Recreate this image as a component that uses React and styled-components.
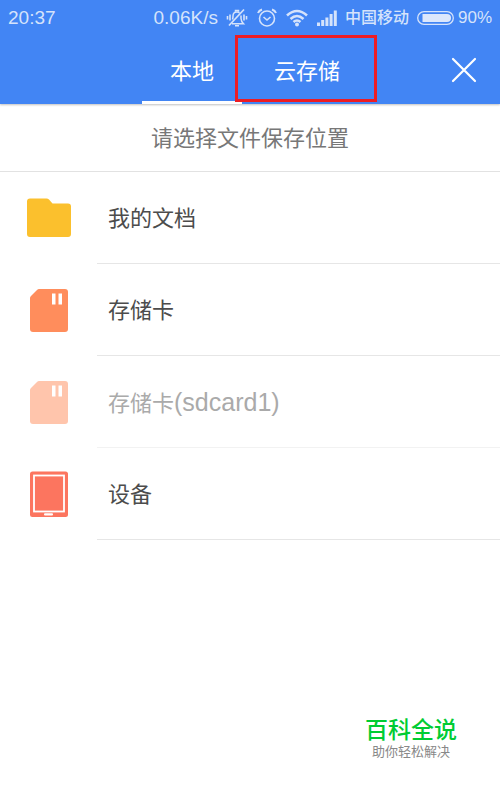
import React, { useState } from "react";
import styled, { createGlobalStyle } from "styled-components";

const places = [
  { id: "docs", name: "我的文档", icon: FolderIcon },
  { id: "card", name: "存储卡", icon: CardIcon },
  { id: "card1", name: "存储卡", suffix: "(sdcard1)", icon: CardIcon, disabled: true },
  { id: "device", name: "设备", icon: DeviceIcon },
];

const tabs = [
  { id: "local", label: "本地" },
  { id: "cloud", label: "云存储", marked: true },
];

export const App = () => {
  const [activeTab, setActiveTab] = useState("local");

  return (
    <>
      <GlobalStyle />
      <StyledPage>
        <StyledHeader>
          <StatusBar />
          <StyledNav>
            <StyledTabs role="tablist">
              {tabs.map((tab) => (
                <StyledTab
                  key={tab.id}
                  role="tab"
                  aria-selected={activeTab === tab.id}
                  $active={activeTab === tab.id}
                  onClick={() => setActiveTab(tab.id)}
                >
                  {tab.label}
                  {tab.marked && <StyledMarker />}
                </StyledTab>
              ))}
            </StyledTabs>
            <StyledClose aria-label="关闭">
              <svg width="26" height="26" viewBox="0 0 26 26" stroke="#fff" strokeWidth="2.2">
                <path d="M2 2l22 22M24 2L2 24" strokeLinecap="round" />
              </svg>
            </StyledClose>
          </StyledNav>
        </StyledHeader>
        <StyledTitle>请选择文件保存位置</StyledTitle>
        <StyledList>
          {places.map((place) => (
            <PlaceRow key={place.id} {...place} />
          ))}
        </StyledList>
        <StyledFooter>
          <StyledBrand>百科全说</StyledBrand>
          <StyledSlogan>助你轻松解决</StyledSlogan>
        </StyledFooter>
      </StyledPage>
    </>
  );
};
export default App;

const PlaceRow = ({ name, suffix, icon: Icon, disabled = false }) => (
  <StyledItem>
    <StyledRow disabled={disabled}>
      <StyledIconCell>
        <Icon />
      </StyledIconCell>
      <StyledName $light={disabled}>
        <span>
          {name}
          {suffix && <StyledSuffix>{suffix}</StyledSuffix>}
        </span>
      </StyledName>
    </StyledRow>
  </StyledItem>
);

const StatusBar = () => (
  <StyledStatus>
    <StyledClock>20:37</StyledClock>
    <StyledSpeed>0.06K/s</StyledSpeed>
    <MuteIcon />
    <AlarmIcon />
    <WifiIcon />
    <SignalIcon />
    <StyledCarrier>中国移动</StyledCarrier>
    <BatteryIcon />
    <StyledPercent>90%</StyledPercent>
  </StyledStatus>
);

function FolderIcon() {
  return (
    <svg width="44" height="40" viewBox="0 0 44 40">
      <path
        fill="#fbc02d"
        d="M3 .5H19.500Q21 .5 22 1.500L25.500 5.500H41Q44 5.500 44 8.500V36Q44 39 41 39H3Q0 39 0 36V3.500Q0 .5 3 .5Z"
      />
    </svg>
  );
}

function CardIcon() {
  return (
    <svg width="38" height="44" viewBox="0 0 38 44">
      <path
        fill="#ff8d5c"
        d="M9 1H35Q38 1 38 4V41Q38 44 35 44H3Q0 44 0 41V10Q0 9 1 8L7 2Q8 1 9 1Z"
      />
      <path fill="#fff" d="M22 5.500h3.500v11H22zM28.500 5.500H32v11h-3.500z" />
    </svg>
  );
}

function DeviceIcon() {
  return (
    <svg width="38" height="46" viewBox="0 0 38 46">
      <rect y=".5" width="38" height="45.500" rx="2.500" fill="#fc755f" />
      <rect x="4" y="4.500" width="30" height="36" fill="none" stroke="#fff" strokeWidth="1.800" />
      <rect x="14" y="42.300" width="9" height="2.200" rx="1" fill="#fff" />
    </svg>
  );
}

const MuteIcon = () => (
  <svg width="22" height="20" viewBox="0 0 22 20" fill="none" stroke="#d5e3fb" strokeWidth="1.500">
    <path d="M6.500 11.500Q7 10 7 8Q7 4 11 4Q12.500 4 13.500 4.800M15 7.500V10.500Q15.200 13.500 17.500 15.700H6" />
    <path d="M9.500 3.700V2.500H12.500V3.700M9 17.800H13" />
    <path d="M18 1.500L3 17.500" strokeWidth="1.700" />
    <path d="M4 6.500V12.500M1.500 8V11.500M18 6.500V12.500M20.500 8V11.500" strokeWidth="1.600" />
  </svg>
);

const AlarmIcon = () => (
  <svg width="20" height="20" viewBox="0 0 20 20" fill="none" stroke="#d5e3fb" strokeWidth="1.600">
    <circle cx="10" cy="10.500" r="7.500" />
    <path d="M6.500 9L10 12L13.500 9" />
    <path d="M1 5Q2 2.500 5 1.500M19 5Q18 2.500 15 1.500" strokeWidth="2" />
  </svg>
);

const WifiIcon = () => (
  <svg width="22" height="18" viewBox="0 0 22 18" fill="none" stroke="#d5e3fb" strokeWidth="2.600">
    <path d="M1 6.500Q11 -2.500 21 6.500M4.500 10Q11 4 17.500 10M7.500 13Q11 10 14.500 13" />
    <circle cx="11" cy="15.500" r="2" fill="#d5e3fb" stroke="none" />
  </svg>
);

const SignalIcon = () => (
  <svg width="20" height="16" viewBox="0 0 20 16" fill="#d5e3fb">
    <path d="M0 12.500h3V16H0zM4.200 10h3v6h-3zM8.400 7.500h3V16h-3zM12.600 4h3v12h-3zM16.800 .5h3V16h-3z" />
  </svg>
);

const BatteryIcon = () => (
  <svg width="37" height="14" viewBox="0 0 37 14">
    <rect x=".7" y=".7" width="35.600" height="12.600" rx="6.300" fill="none" stroke="#d5e3fb" strokeWidth="1.300" />
    <path fill="#dbe7fc" d="M5.500 3H30a4 4 0 0 1 0 8H5.500z" />
  </svg>
);

const GlobalStyle = createGlobalStyle`
  * {
    box-sizing: border-box;
  }

  body {
    margin: 0;
    background: #fff;
    font-family: "Liberation Sans", "Noto Sans CJK SC", sans-serif;
  }

  button {
    margin: 0;
    padding: 0;
    border: 0;
    background: none;
    font: inherit;
    color: inherit;
  }

  svg {
    display: block;
    flex-shrink: 0;
  }
`;

const StyledPage = styled.div`
  display: flex;
  flex-direction: column;
  min-height: 100vh;
`;

const StyledHeader = styled.header`
  background: #4285f4;
  box-shadow: 0 1px 2px rgba(0, 0, 0, 0.25);
`;

const StyledStatus = styled.div`
  display: flex;
  height: 36px;
  padding: 0 8px;
  align-items: center;
  gap: 8px;
  color: #d5e3fb;
  white-space: nowrap;

  svg + svg {
    margin-left: 1px;
  }
`;

const StyledClock = styled.span`
  margin-right: auto;
  font-size: 19px;
`;

const StyledSpeed = styled.span`
  font-size: 19px;
`;

const StyledCarrier = styled.span`
  font-size: 16px;
  font-weight: 500;
  line-height: 20px;
`;

const StyledPercent = styled.span`
  margin-left: -4px;
  font-size: 17px;
`;

const StyledNav = styled.nav`
  display: grid;
  grid-template-columns: 1fr auto 1fr;
  height: 68px;
  padding: 0 23px;
  align-items: center;
`;

const StyledTabs = styled.div`
  display: flex;
  grid-column: 2;
  height: 100%;
  padding-left: 14px;
`;

const StyledTab = styled.button`
  position: relative;
  padding: 0 28px;
  border-bottom: 3px solid ${({ $active }) => ($active ? "#fff" : "transparent")};
  font-size: 22px;
  color: #fff;

  & + & {
    padding: 0 32px;
  }
`;

const StyledMarker = styled.span`
  position: absolute;
  top: -1px;
  bottom: -1px;
  left: -7px;
  right: -5px;
  border: 3px solid #ed1c24;
`;

const StyledClose = styled.button`
  justify-self: end;
`;

const StyledTitle = styled.h1`
  margin: 0;
  padding: 18px 0 16px;
  border-bottom: 1px solid #e2e2e2;
  font-size: 22px;
  font-weight: 400;
  line-height: 33px;
  text-align: center;
  color: #777;
`;

const StyledList = styled.ul`
  margin: 0;
  padding: 0;
  list-style: none;
`;

const StyledItem = styled.li`
  display: flex;
`;

const StyledRow = styled.button`
  display: flex;
  width: 100%;
  height: 92px;
  align-items: stretch;
  text-align: left;

  &:disabled svg {
    opacity: 0.5;
  }
`;

const StyledIconCell = styled.span`
  display: flex;
  width: 97px;
  align-items: center;
  justify-content: center;
`;

const StyledName = styled.span`
  display: flex;
  flex: 1;
  padding: 3px 0 0 11px;
  align-items: center;
  border-bottom: 1px solid ${({ $light }) => ($light ? "#f2f2f2" : "#e6e6e6")};
  font-size: 22px;
  line-height: 32px;
  color: ${({ $light }) => ($light ? "#aaa" : "#4c4c4c")};
`;

const StyledSuffix = styled.span`
  font-size: 25px;
`;

const StyledFooter = styled.footer`
  margin-top: auto;
  padding: 16px 43px 30px;
  align-self: flex-end;
  text-align: center;
`;

const StyledBrand = styled.div`
  font-size: 23px;
  font-weight: 500;
  line-height: 28px;
  color: #00cc33;
`;

const StyledSlogan = styled.div`
  font-size: 13px;
  line-height: 16px;
  color: #888;
`;
